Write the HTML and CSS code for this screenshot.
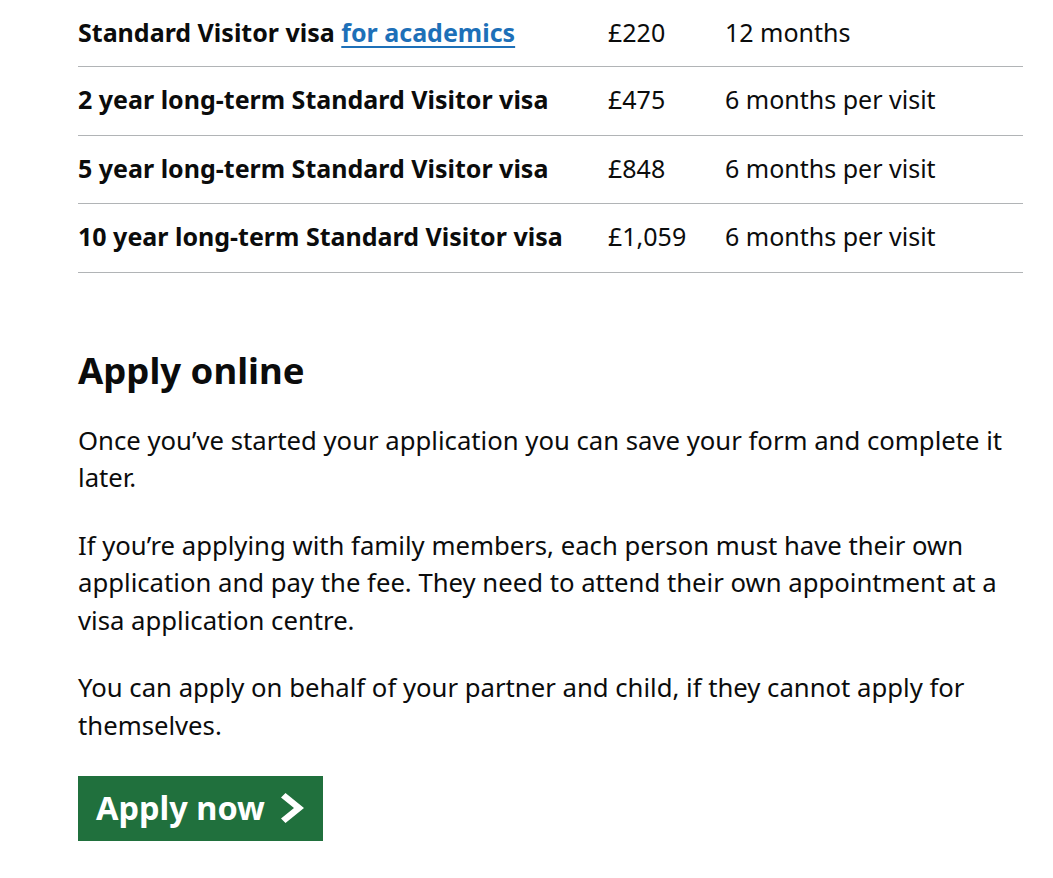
FILE: index.html
```html
<!DOCTYPE html>
<html lang="en">
<head>
    <meta charset="UTF-8">
    <meta name="viewport" content="width=device-width, initial-scale=1.0">
    <title>Standard Visitor visa</title>
    <link rel="stylesheet" href="styles.css">
</head>
<body>
    <main class="content">
        <div class="fees">
            <div class="row first">
                <div class="cell type">Standard Visitor visa <a href="#">for academics</a></div>
                <div class="cell">£220</div>
                <div class="cell">12 months</div>
            </div>
            <div class="row">
                <div class="cell type">2 year long-term Standard Visitor visa</div>
                <div class="cell">£475</div>
                <div class="cell">6 months per visit</div>
            </div>
            <div class="row">
                <div class="cell type">5 year long-term Standard Visitor visa</div>
                <div class="cell">£848</div>
                <div class="cell">6 months per visit</div>
            </div>
            <div class="row">
                <div class="cell type">10 year long-term Standard Visitor visa</div>
                <div class="cell">£1,059</div>
                <div class="cell">6 months per visit</div>
            </div>
        </div>

        <h2 class="heading">Apply online</h2>
        <p>Once you’ve started your application you can save your form and complete it later.</p>
        <p>If you’re applying with family members, each person must have their own application and pay the fee. They need to attend their own appointment at a visa application centre.</p>
        <p>You can apply on behalf of your partner and child, if they cannot apply for themselves.</p>

        <a class="start-button" href="#">
            Apply now
            <svg width="23" height="30" viewBox="0 0 23 30" aria-hidden="true">
                <path d="M0 4.5 L4.5 0 L23 15 L4.5 30 L0 25.5 L13 15 Z" fill="#fff"/>
            </svg>
        </a>
    </main>
</body>
</html>
```

FILE: styles.css
```css
*{
    margin: 0;
    padding: 0;
    box-sizing: border-box;
}
body{
    background: #fff;
    color: #0b0c0c;
    font-family: "Noto Sans", sans-serif;
}
.content{
    width: 945px;
    margin-left: 78px;
}
.fees{
    font-size: 25px;
}
.row{
    display: grid;
    grid-template-columns: 530px 117px 1fr;
    align-items: center;
    height: 68.5px;
    padding-bottom: 3px;
    border-bottom: 1px solid #b1b4b6;
}
.row.first{
    height: 67px;
}
.type{
    font-weight: 700;
}
.type a{
    color: #1d70b8;
    text-decoration: underline;
    text-decoration-thickness: 2px;
    text-underline-offset: 4px;
}
.heading{
    font-size: 36.5px;
    font-weight: 700;
    line-height: 46px;
    margin-top: 74px;
    margin-bottom: 29px;
}
p{
    font-size: 25.7px;
    line-height: 37.5px;
    margin-bottom: 30px;
}
.start-button{
    display: inline-flex;
    align-items: center;
    gap: 16px;
    height: 65px;
    margin-top: 2px;
    padding: 0 19px 2px 18px;
    background: #20703d;
    box-shadow: 0 3px 0 #0c2d1a;
    color: #fff;
    font-size: 32.5px;
    font-weight: 700;
    text-decoration: none;
}
```
